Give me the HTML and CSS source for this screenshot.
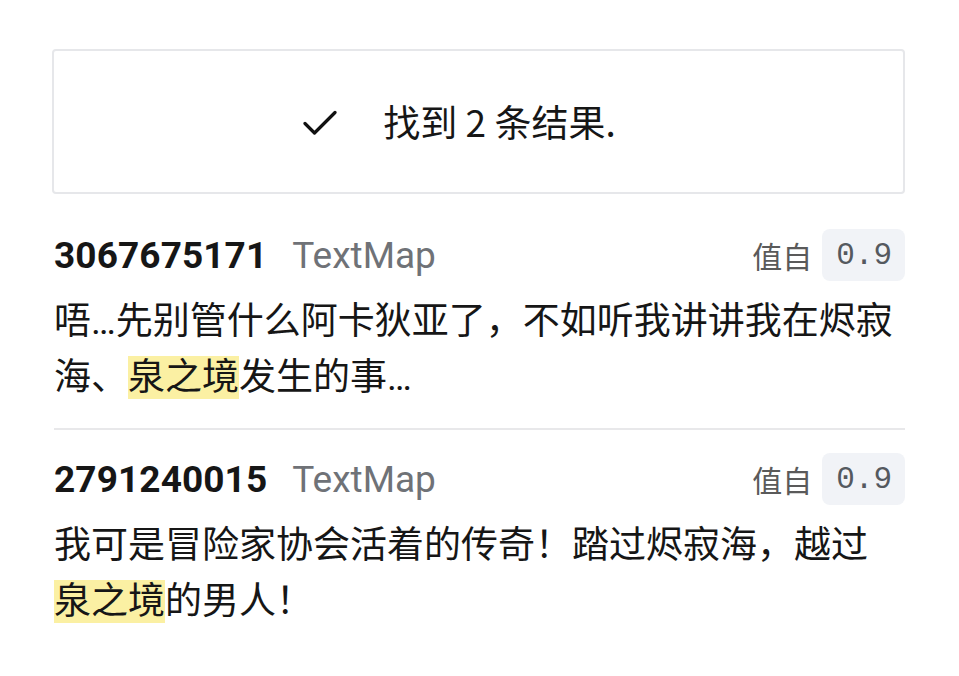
FILE: index.html
```html
<!DOCTYPE html>
<html lang="zh-CN">
<head>
<meta charset="utf-8">
<link rel="stylesheet" href="styles.css">
</head>
<body>
<main class="page">
  <section class="status">
    <svg class="check" viewBox="0 0 34 28" width="34" height="28" aria-hidden="true">
      <path d="M2 14.5 L11.5 24 L32 3.5" fill="none" stroke="#111" stroke-width="3.2" stroke-linecap="round" stroke-linejoin="round"/>
    </svg>
    <span class="status-text">找到 2 条结果.</span>
  </section>

  <ul class="results">
    <li class="result">
      <div class="result-head">
        <span class="rid">3067675171</span>
        <span class="rsrc">TextMap</span>
        <span class="spacer"></span>
        <span class="rlabel">值自</span>
        <span class="score">0.9</span>
      </div>
      <p class="rtext">唔…先别管什么阿卡狄亚了，不如听我讲讲我在烬寂海、<mark class="hl">泉之境</mark>发生的事…</p>
    </li>
    <li class="result">
      <div class="result-head">
        <span class="rid">2791240015</span>
        <span class="rsrc">TextMap</span>
        <span class="spacer"></span>
        <span class="rlabel">值自</span>
        <span class="score">0.9</span>
      </div>
      <p class="rtext">我可是冒险家协会活着的传奇！踏过烬寂海，越过<mark class="hl">泉之境</mark>的男人！</p>
    </li>
  </ul>
</main>
</body>
</html>
```

FILE: styles.css
```css
* { box-sizing: border-box; }
html, body {
  margin: 0;
  padding: 0;
  background: #ffffff;
}
body {
  font-family: Roboto, "Noto Sans CJK SC", sans-serif;
  color: #141414;
}
.page {
  padding: 49px 54px 0 52px;
  width: 959px;
}
.status {
  height: 145px;
  border: 2px solid #e6e7ea;
  border-radius: 4px;
  display: flex;
  align-items: center;
  justify-content: center;
  gap: 46px;
  padding-right: 38px;
}
.check { display: block; margin-top: 2px; }
.status-text {
  font-family: "Noto Sans CJK SC", sans-serif;
  font-size: 37px;
  line-height: 1;
  color: #161616;
}
.results {
  list-style: none;
  margin: 35px 0 0 0;
  padding: 0 0 0 2px;
}
.result {
  padding-bottom: 22px;
  border-bottom: 2px solid #e8e8ea;
}
.result + .result {
  border-bottom: none;
  padding-top: 23px;
}
.result-head {
  display: flex;
  align-items: center;
  height: 52px;
}
.rid {
  font-size: 37px;
  font-weight: 700;
  color: #161616;
  letter-spacing: 0.1px;
}
.rsrc {
  font-size: 37px;
  color: #6f7277;
  margin-left: 25px;
}
.spacer { flex: 1; }
.rlabel {
  font-family: "Noto Sans CJK SC", sans-serif;
  font-size: 30px;
  color: #5a5a5a;
  margin-right: 10px;
}
.score {
  font-family: "Liberation Mono", monospace;
  font-size: 31px;
  color: #55595f;
  background: #f1f3f7;
  border-radius: 8px;
  height: 52px;
  display: flex;
  align-items: center;
  padding: 0 13px 0 14px;
}
.rtext {
  margin: 13px 0 0 0;
  font-size: 37px;
  line-height: 56px;
  padding-right: 6px;
  color: #161616;
}
.hl {
  background: #fbf0a3;
  color: inherit;
}
```
